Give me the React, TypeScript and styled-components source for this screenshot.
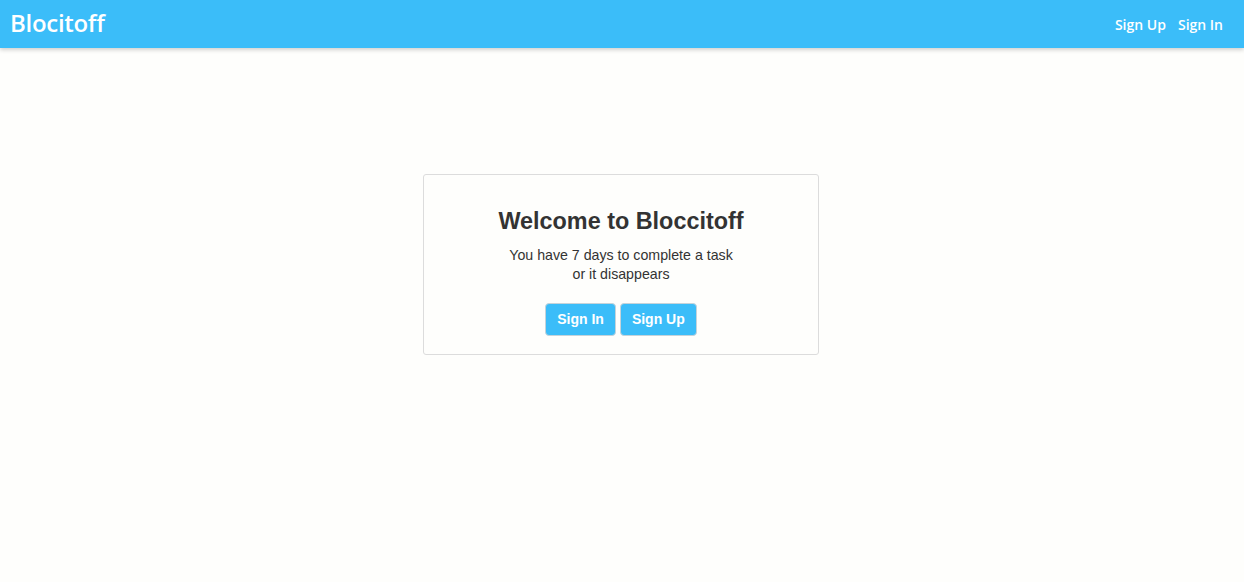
import React from "react";
import styled, { createGlobalStyle } from "styled-components";

const Global = createGlobalStyle`
  html, body { margin: 0; padding: 0; }
  body {
    background: #fefefc;
    font-family: "Liberation Sans", Arial, sans-serif;
    color: #333;
    font-size: 14px;
    line-height: 1.42857;
  }
`;

const NavBar = styled.header`
  height: 48px;
  background: #3bbdf9;
  box-shadow: 0 2px 4px rgba(0, 0, 0, 0.18);
  display: flex;
  align-items: center;
  justify-content: space-between;
  padding: 0 21px 0 10px;
  font-family: "Open Sans", sans-serif;
  color: #fff;
`;

const Brand = styled.a`
  font-size: 24px;
  font-weight: 600;
  color: #fff;
  text-decoration: none;
  letter-spacing: -0.3px;
  margin-top: -2px;
`;

const NavLinks = styled.nav`
  display: flex;
  gap: 12px;
  margin-top: 1px;
`;

const NavLink = styled.a`
  font-size: 14px;
  font-weight: 600;
  color: #fff;
  text-decoration: none;
`;

const Main = styled.main`
  display: flex;
  justify-content: center;
  padding-top: 126px;
`;

const Card = styled.section`
  width: 396px;
  box-sizing: border-box;
  border: 1px solid #dcdcdc;
  border-radius: 3px;
  padding: 34px 20px 18px;
  text-align: center;
  margin-right: 2px;
`;

const Title = styled.h2`
  margin: 0 0 10px;
  font-size: 23.4px;
  font-weight: 700;
  line-height: 1.1;
  color: #333;
`;

const Text = styled.p`
  margin: 0 0 18px;
  font-size: 14.2px;
  line-height: 19.5px;
  padding-top: 1px;
`;

const Actions = styled.div`
  display: flex;
  justify-content: center;
  gap: 4px;
`;

const Button = styled.button`
  font-family: "Liberation Sans", Arial, sans-serif;
  font-size: 14px;
  font-weight: 700;
  line-height: 19px;
  padding: 6px 11px;
  color: #fff;
  background: #3bbdf9;
  border: 1px solid #c5d3da;
  border-radius: 4px;
  cursor: pointer;
`;

export default function App() {
  return (
    <>
      <Global />
      <NavBar>
        <Brand href="#">Blocitoff</Brand>
        <NavLinks>
          <NavLink href="#">Sign Up</NavLink>
          <NavLink href="#">Sign In</NavLink>
        </NavLinks>
      </NavBar>
      <Main>
        <Card>
          <Title>Welcome to Bloccitoff</Title>
          <Text>
            You have 7 days to complete a task
            <br />
            or it disappears
          </Text>
          <Actions>
            <Button>Sign In</Button>
            <Button>Sign Up</Button>
          </Actions>
        </Card>
      </Main>
    </>
  );
}
